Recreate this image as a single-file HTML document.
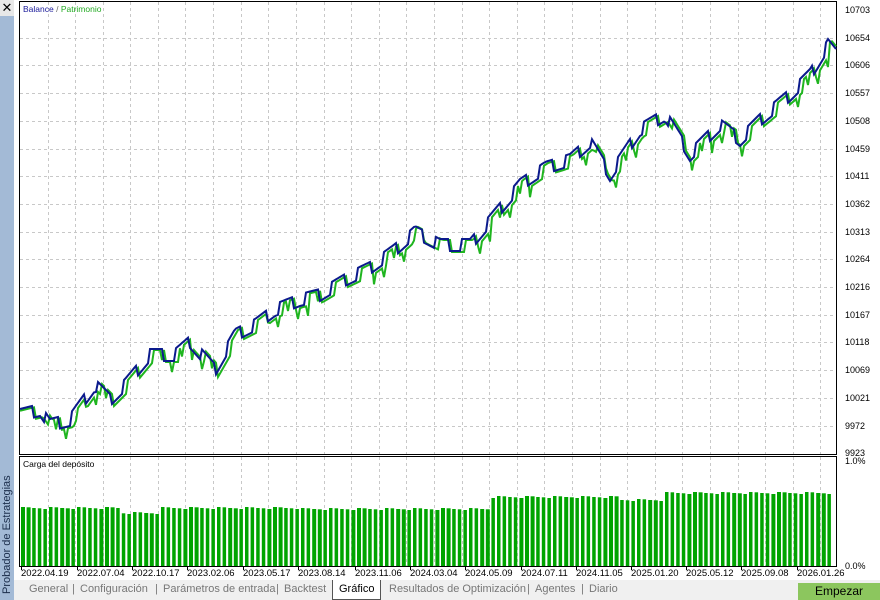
<!DOCTYPE html>
<html><head><meta charset="utf-8"><style>
*{margin:0;padding:0;box-sizing:border-box}
body{width:880px;height:600px;overflow:hidden;background:#fff;font-family:"Liberation Sans",sans-serif;position:relative}
#side{position:absolute;left:0;top:0;width:14px;height:600px;background:#a3bad6}
#x{position:absolute;left:0;top:0;width:14px;height:16px;background:#e8e8e8;font-size:13px;text-align:center;line-height:16px;color:#000}
#vt{position:absolute;left:-80px;top:500px;width:174px;height:14px;transform:rotate(-90deg);transform-origin:center;font-size:11px;color:#1a2c4a;line-height:14px;text-align:left}
.yl{position:absolute;left:845px;font-size:9px;color:#000}
.dl{position:absolute;top:568px;font-size:9.5px;color:#000}
#tabs{position:absolute;left:14px;top:580px;width:866px;height:20px;background:#f0f0f0;font-size:11px;color:#777}
#tabs span{position:absolute;top:3px}
#btn{position:absolute;left:798px;top:583px;width:82px;height:17px;background:#8cc65e;color:#000;font-size:12px;text-align:center;line-height:17px}
</style></head><body>
<div id="side"><div id="x">✕</div><div id="vt">Probador de Estrategias</div></div>
<svg width="880" height="600" style="position:absolute;left:0;top:0">
<g id="grid" stroke="#c8c8c8" stroke-dasharray="3,3" stroke-width="1"></g>
<rect x="19.5" y="1.5" width="817" height="453" fill="none" stroke="#000"/>
<rect x="19.5" y="456.5" width="817" height="110" fill="none" stroke="#000"/>
<g id="bars" fill="#00a400"></g>
<polyline id="eq" fill="none" stroke="#1fb51f" stroke-width="2"/>
<polyline id="bal" fill="none" stroke="#0b1a8c" stroke-width="2"/>
<g id="ticks" stroke="#000"></g>
<text x="23" y="12" font-size="8.5" font-family="Liberation Sans"><tspan fill="#1a1a9a">Balance</tspan><tspan fill="#666"> / </tspan><tspan fill="#22aa22">Patrimonio</tspan></text>
<text x="23" y="467" font-size="8.5" font-family="Liberation Sans" fill="#000">Carga del depósito</text>
</svg>
<div id="yl"></div>
<div class="yl" style="top:456px">1.0%</div>
<div class="yl" style="top:561px">0.0%</div>
<div class="dl" style="left:21px">2022.04.19</div>
<div class="dl" style="left:77px">2022.07.04</div>
<div class="dl" style="left:132px">2022.10.17</div>
<div class="dl" style="left:187px">2023.02.06</div>
<div class="dl" style="left:243px">2023.05.17</div>
<div class="dl" style="left:298px">2023.08.14</div>
<div class="dl" style="left:355px">2023.11.06</div>
<div class="dl" style="left:410px">2024.03.04</div>
<div class="dl" style="left:465px">2024.05.09</div>
<div class="dl" style="left:521px">2024.07.11</div>
<div class="dl" style="left:576px">2024.11.05</div>
<div class="dl" style="left:631px">2025.01.20</div>
<div class="dl" style="left:686px">2025.05.12</div>
<div class="dl" style="left:741px">2025.09.08</div>
<div class="dl" style="left:797px">2026.01.26</div>
<div id="tabs">
<span style="left:15px">General</span><span style="left:58px">|</span>
<span style="left:66px">Configuración</span><span style="left:141px">|</span>
<span style="left:149px">Parámetros de entrada</span><span style="left:262px">|</span>
<span style="left:270px">Backtest</span>
<div style="position:absolute;left:318px;top:0;width:49px;height:20px;background:#fff;border:1px solid #555;border-top:none"></div>
<span style="left:325px;color:#000">Gráfico</span>
<span style="left:375px">Resultados de Optimización</span><span style="left:513px">|</span>
<span style="left:521px">Agentes</span><span style="left:567px">|</span>
<span style="left:575px">Diario</span>
</div>
<div id="btn">Empezar</div>
<script>
(function(){
var ns="http://www.w3.org/2000/svg";
var g=document.getElementById('grid');
function ln(p,x1,y1,x2,y2){var l=document.createElementNS(ns,'line');l.setAttribute('x1',x1);l.setAttribute('y1',y1);l.setAttribute('x2',x2);l.setAttribute('y2',y2);p.appendChild(l);}
for(var x=47.5;x<836;x+=27.6){ln(g,Math.round(x)+.5,2,Math.round(x)+.5,454);ln(g,Math.round(x)+.5,457,Math.round(x)+.5,566);}
var vals=[10703,10654,10606,10557,10508,10459,10411,10362,10313,10264,10216,10167,10118,10069,10021,9972,9923];
var h='';
for(var i=0;i<17;i++){var y=10+i*27.7;if(i>0&&i<16)ln(g,20,Math.round(y)+.5,836,Math.round(y)+.5);h+='<div class="yl" style="top:'+(y-5)+'px">'+vals[i]+'</div>';}
document.getElementById('yl').innerHTML=h;
var t=document.getElementById('ticks');
[21,77,132,187,243,298,355,410,465,521,576,631,686,741,797].forEach(function(x){ln(t,x+.5,566,x+.5,570);});
var K=[[20,415],[40,410],[50,425],[70,420],[95,385],[110,400],[125,385],[150,355],[175,355],[190,342],[215,370],[235,335],[255,325],[275,310],[300,300],[320,295],[345,280],[370,268],[395,250],[415,232],[440,245],[470,245],[495,215],[520,185],[545,168],[570,160],[590,142],[610,175],[640,130],[665,115],[690,155],[720,125],[740,140],[760,120],[790,95],[810,75],[828,45],[836,55]];
function base(x){for(var i=0;i<K.length-1;i++){if(x<=K[i+1][0]){var a=K[i],b=K[i+1];return a[1]+(b[1]-a[1])*(x-a[0])/(b[0]-a[0]);}}return K[K.length-1][1];}
var pb=[],pe=[];
for(var x=20;x<=836;x+=2){var ph=((x-20)%26)/26;var sq=ph<0.5?-6:6;var b=base(x)+sq;pb.push(x+','+b.toFixed(1));
var e=base(x-3)+(((x-23)%26)/26<0.5?-5:7)+((x*37)%53<6?10:0);pe.push(x+','+e.toFixed(1));}
document.getElementById('bal').setAttribute('points',pb.join(' '));
document.getElementById('eq').setAttribute('points',pe.join(' '));
var bs=document.getElementById('bars');
for(var x=21;x<832;x+=5.6){var tp;if(x<120)tp=507;else if(x<160)tp=512;else if(x<300)tp=507;else if(x<490)tp=508;else if(x<660)tp=(x>620?499:496);else tp=492;
tp+=((Math.round(x)*13)%7)/3;var r=document.createElementNS(ns,'rect');r.setAttribute('x',x.toFixed(1));r.setAttribute('y',tp.toFixed(1));r.setAttribute('width',(Math.round(x)%3<1?4:3.5));r.setAttribute('height',(566-tp).toFixed(1));bs.appendChild(r);}
})();
</script>
</body></html>
